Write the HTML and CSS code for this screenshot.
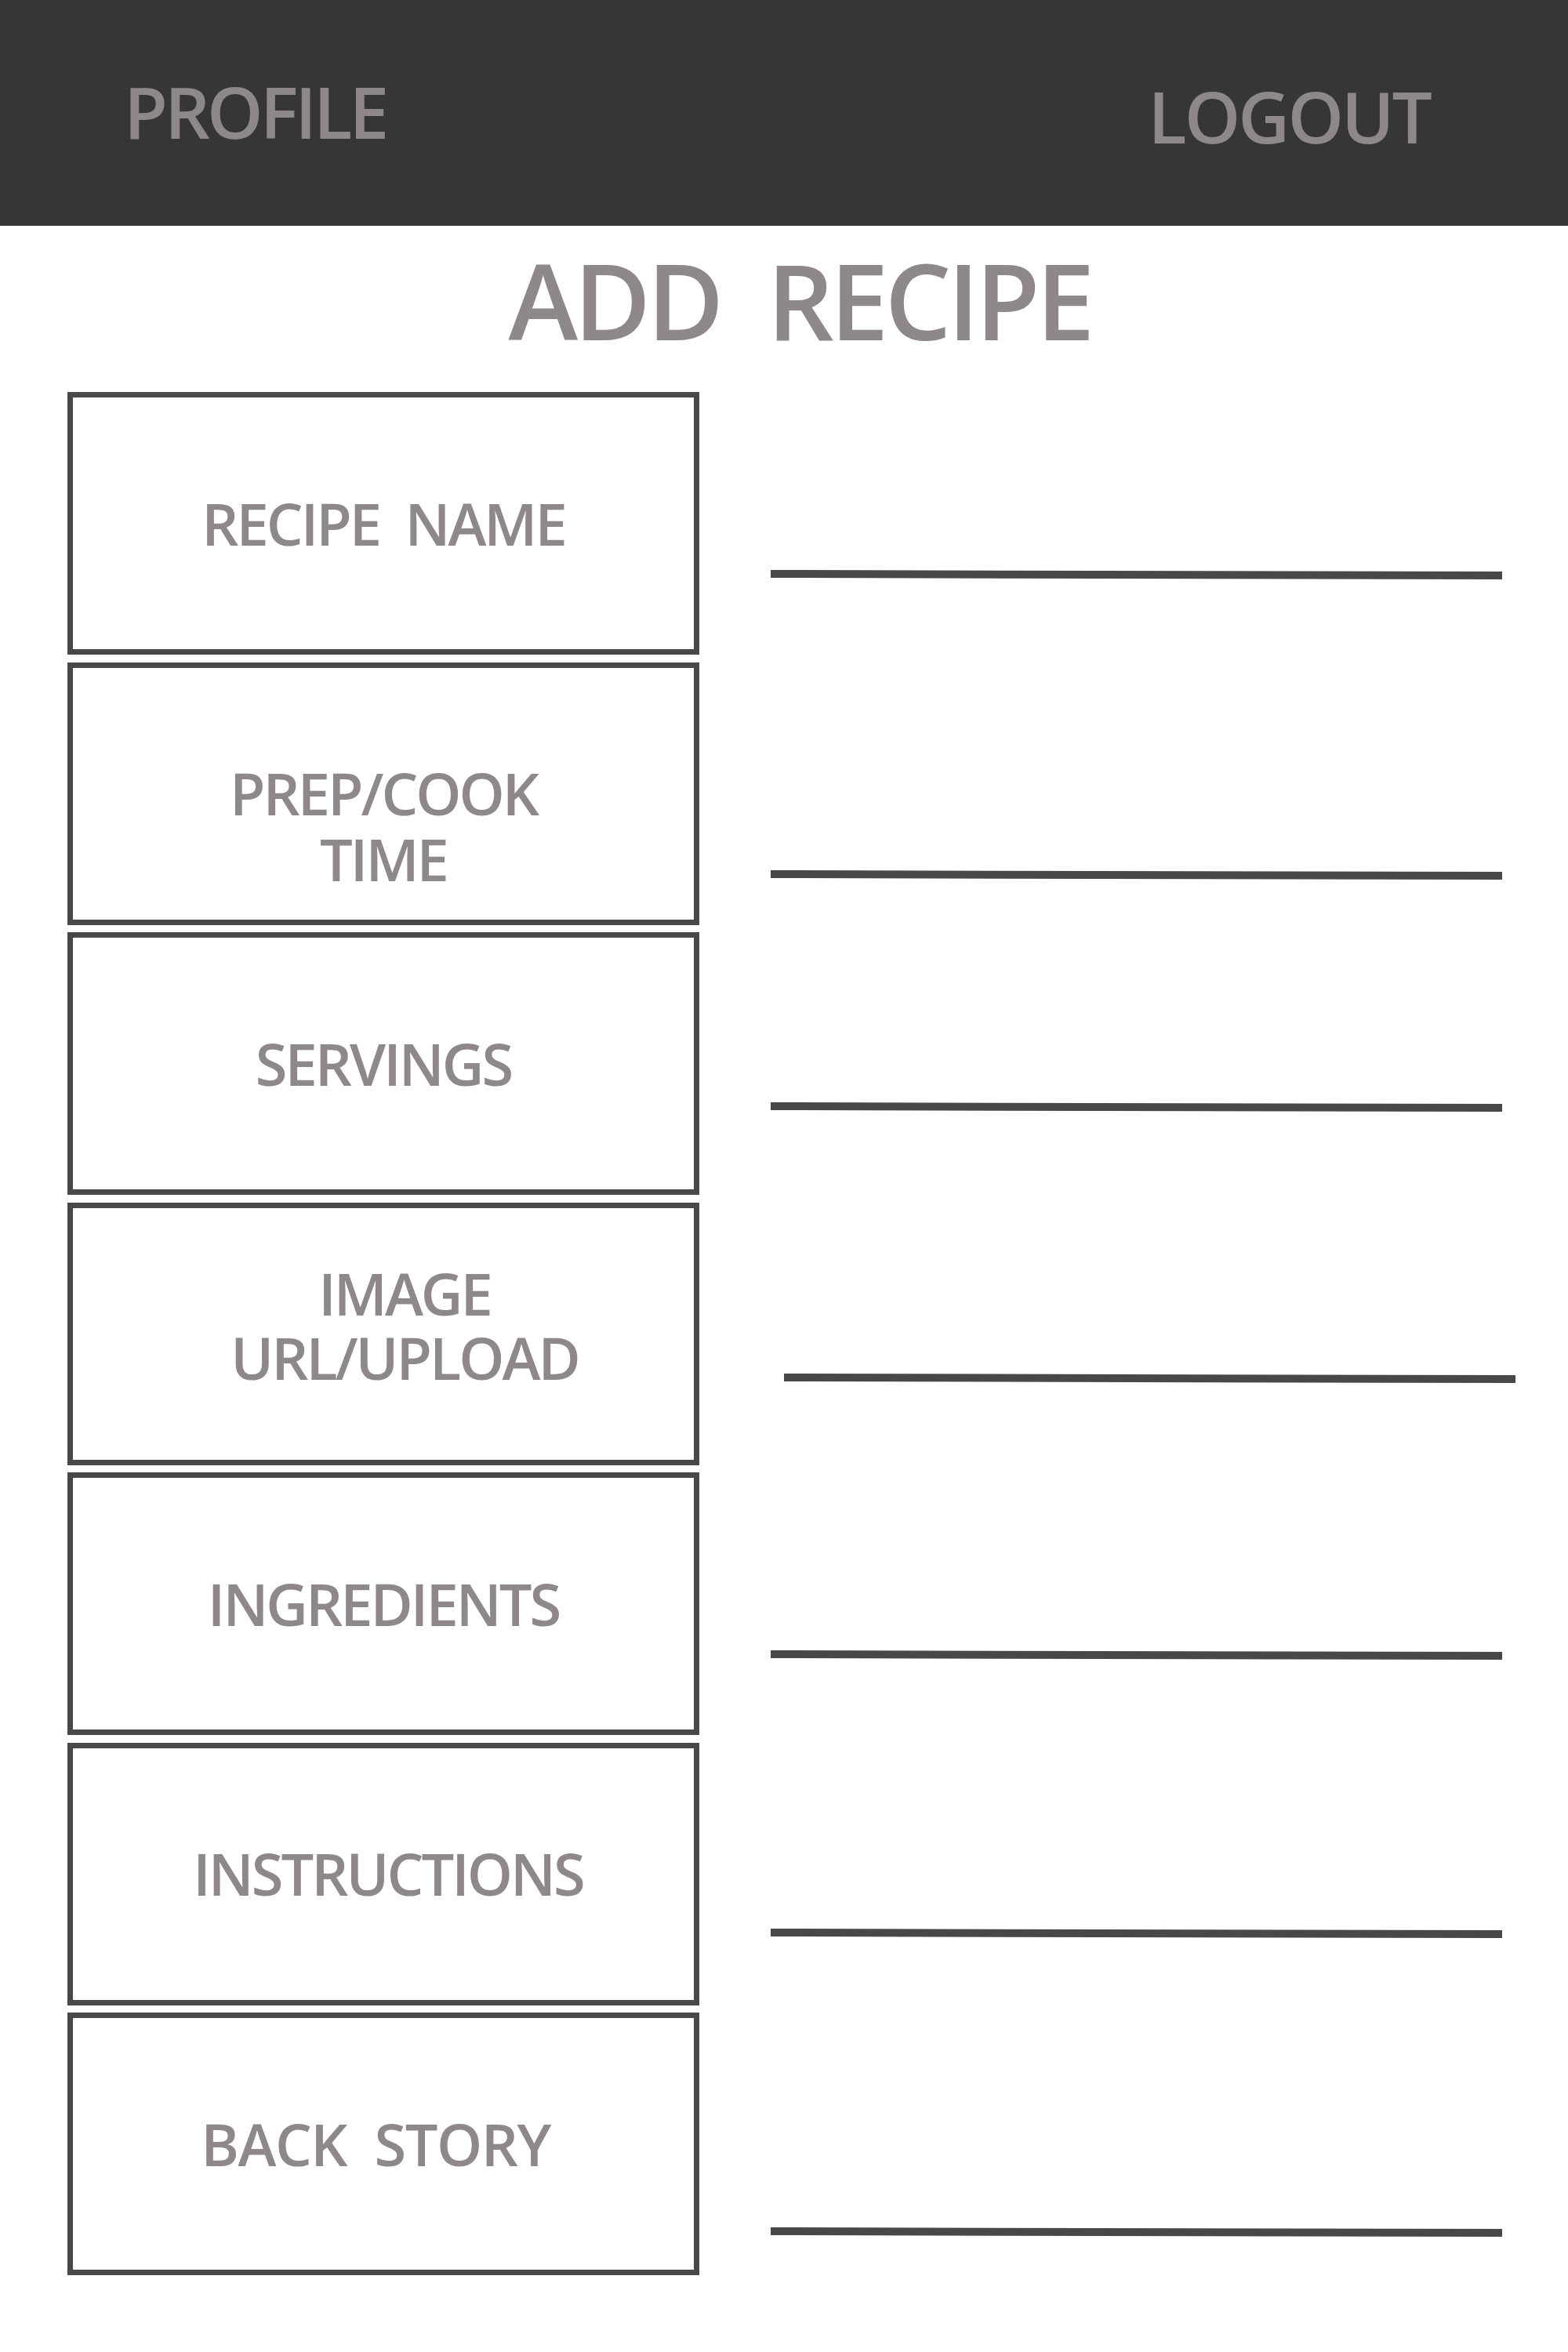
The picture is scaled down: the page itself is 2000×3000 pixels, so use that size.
FILE: index.html
```html
<!DOCTYPE html>
<html lang="en">
<head>
<meta charset="utf-8">
<title>Add Recipe</title>
<link rel="stylesheet" href="styles.css">
</head>
<body>
<header class="topbar">
  <a class="nav-link">PROFILE</a>
  <a class="nav-link nav-logout">LOGOUT</a>
</header>
<main class="page">
  <h1 class="title">ADD&nbsp; RECIPE</h1>
  <div class="form">
    <div class="row">
      <div class="label-box"><span class="label">RECIPE&nbsp; NAME</span></div>
      <div class="field field-1"><div class="underline"></div></div>
    </div>
    <div class="row">
      <div class="label-box label-box-low"><span class="label"><span class="label-line">PREP/COOK</span><span class="label-line">TIME</span></span></div>
      <div class="field field-2"><div class="underline"></div></div>
    </div>
    <div class="row">
      <div class="label-box"><span class="label">SERVINGS</span></div>
      <div class="field field-3"><div class="underline"></div></div>
    </div>
    <div class="row">
      <div class="label-box label-box-right"><span class="label label-tight"><span class="label-line">IMAGE</span><span class="label-line">URL/UPLOAD</span></span></div>
      <div class="field field-4"><div class="underline"></div></div>
    </div>
    <div class="row">
      <div class="label-box"><span class="label">INGREDIENTS</span></div>
      <div class="field field-5"><div class="underline"></div></div>
    </div>
    <div class="row">
      <div class="label-box label-box-r2"><span class="label">INSTRUCTIONS</span></div>
      <div class="field field-6"><div class="underline"></div></div>
    </div>
    <div class="row">
      <div class="label-box label-box-l2"><span class="label label-wide">BACK&nbsp; STORY</span></div>
      <div class="field field-7"><div class="underline"></div></div>
    </div>
  </div>
</main>
</body>
</html>
```

FILE: styles.css
```css
* {
  box-sizing: border-box;
}

html, body {
  margin: 0;
  padding: 0;
  background: #ffffff;
}

body {
  width: 2000px;
  font-family: "Open Sans", "Noto Sans", "Liberation Sans", sans-serif;
  color: #8e8888;
}

.topbar {
  height: 288px;
  background: #363636;
  display: flex;
  justify-content: space-between;
  align-items: flex-start;
  padding: 97px 176px 0 158px;
}

.nav-link {
  font-size: 91px;
  line-height: 1;
  font-weight: 600;
  letter-spacing: -4px;
  color: #8e8888;
  text-decoration: none;
}

.nav-logout {
  margin-top: 6px;
  letter-spacing: -3px;
}

.page {
  padding-bottom: 100px;
}

.title {
  margin: 27px 0 0 0;
  padding-left: 40px;
  text-align: center;
  font-size: 134px;
  line-height: 1;
  font-weight: 600;
  letter-spacing: -5px;
  color: #8e8888;
}

.form {
  margin-top: 51px;
  padding-left: 86px;
  display: flex;
  flex-direction: column;
  gap: 9.5px;
}

.row {
  display: flex;
  height: 335px;
}

.label-box {
  width: 806px;
  height: 335px;
  border: 7px solid #484848;
  display: flex;
  align-items: center;
  justify-content: center;
  text-align: center;
}

.label-box-low {
  padding-top: 84px;
}

.label-box-right {
  padding-left: 54px;
  padding-bottom: 20px;
}

.label-box-r2 {
  padding-left: 12px;
}

.label-box-l2 {
  padding-right: 20px;
}

.label {
  font-size: 74px;
  line-height: 84px;
  font-weight: 600;
  letter-spacing: -3px;
  color: #8e8888;
}

.label-wide {
  letter-spacing: -1.5px;
}

.label-line {
  display: block;
  height: 84px;
}

.label-tight {
  line-height: 82px;
}

.label-tight .label-line {
  height: 82px;
}

.field {
  margin-left: 91px;
  width: 933px;
}

.field-4 {
  margin-left: 108px;
}

.underline {
  height: 10px;
  background: #484848;
  transform: rotate(0.13deg);
  transform-origin: left center;
}

.field-1 .underline { margin-top: 227px; }
.field-2 .underline { margin-top: 265px; }
.field-3 .underline { margin-top: 217px; }
.field-4 .underline { margin-top: 218px; }
.field-5 .underline { margin-top: 227px; }
.field-6 .underline { margin-top: 237px; }
.field-7 .underline { margin-top: 274px; }
```
